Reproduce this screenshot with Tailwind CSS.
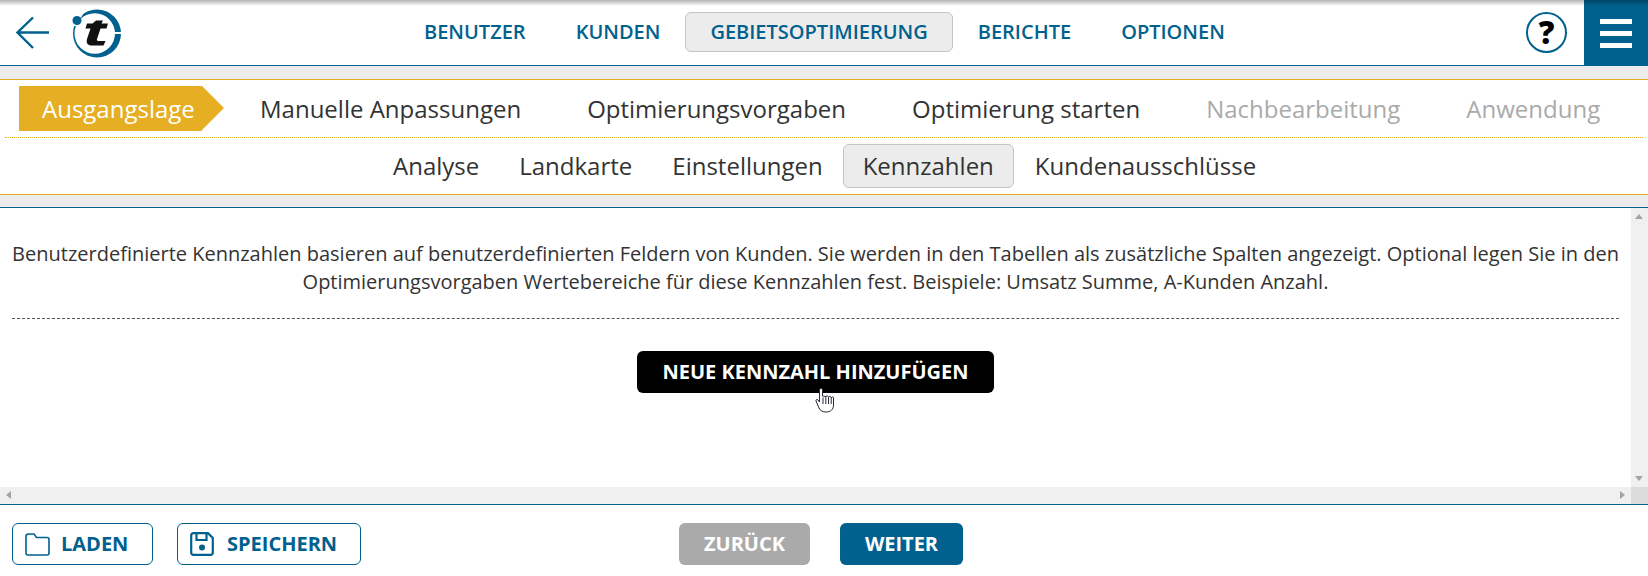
<!DOCTYPE html>
<html lang="de">
<head>
<meta charset="utf-8">
<script src="https://cdn.jsdelivr.net/npm/@tailwindcss/browser@4"></script>
</head>
<body class="w-[1648px] h-[576px] overflow-hidden bg-white font-['Open_Sans',sans-serif] text-[#333]">
<header class="relative h-[66px] flex items-center border-b border-[#00618f] bg-white">
  <div class="absolute z-10 top-0 left-0 right-0 h-[6px] bg-gradient-to-b from-black/30 to-transparent"></div>
  <div class="absolute left-0 top-0 flex items-center h-[65px]">
    <svg class="ml-[16px] w-[34px] h-[34px]" viewBox="0 0 34 34" fill="none" stroke="#00618f" stroke-width="2.4"><path d="M1.5 16.5H33M17 1.5 1.5 16.5 17 32"/></svg>
    <svg class="ml-[22px] w-[50px] h-[50px]" viewBox="0 0 50 50"><path fill-rule="evenodd" d="M25 1.5A24 24 0 1 1 25 49.5 24 24 0 1 1 25 1.5ZM22.75 5.25A20.25 20.25 0 1 0 22.75 45.75 20.25 20.25 0 1 0 22.75 5.25Z" fill="#00618f"/><path d="M0 0H14L10 8 4 18H0Z" fill="#fff"/><rect x="39" y="24" width="11" height="2" fill="#fff"/><circle cx="5" cy="12.5" r="4.5" fill="#00618f"/><path d="M24 12.5H31L29.5 15.5H36L34.5 20.5H28.5L25 31C24.5 32.5 25.5 33 27 33H33.5L31.5 37.5H20C15.5 37.5 14 35 15 31L18.5 20.5H13.5L15 15.5H20.5Z" fill="#111"/></svg>
  </div>
  <nav class="absolute left-[399px] top-[12px] flex items-center text-[20px] font-semibold text-[#00618f] leading-[26px]">
    <a class="px-[24px] py-[6px] border border-transparent rounded-[6px]">BENUTZER</a>
    <a class="px-[24px] py-[6px] border border-transparent rounded-[6px]">KUNDEN</a>
    <a class="px-[24px] py-[6px] border border-[#c4c4c4] rounded-[6px] bg-[#ececec]">GEBIETSOPTIMIERUNG</a>
    <a class="px-[24px] py-[6px] border border-transparent rounded-[6px]">BERICHTE</a>
    <a class="px-[24px] py-[6px] border border-transparent rounded-[6px]">OPTIONEN</a>
  </nav>
  <div class="absolute right-0 top-0 h-[65px] flex items-center">
    <div class="mr-[17px] w-[41px] h-[41px] rounded-full border-[2px] border-[#00618f] flex items-center justify-center text-[31px] font-extrabold leading-none text-black">?</div>
    <div class="w-[64px] h-[65px] pt-[2px] bg-[#00618f] flex flex-col items-center justify-center gap-[7px]">
      <span class="w-[32px] h-[5px] bg-white"></span><span class="w-[32px] h-[5px] bg-white"></span><span class="w-[32px] h-[5px] bg-white"></span>
    </div>
  </div>
</header>
<div class="h-[14px] bg-[#ececec] border-b border-[#e3ae23]"></div>
<section class="h-[115px] border-b border-[#e3ae23]">
  <div class="mx-[5px] h-[58px] pl-[14px] flex items-center gap-[66px] border-b border-dotted border-[#e3ae23] text-[24px] leading-[32px]">
    <div class="flex h-[45px] -mr-[30px]">
      <div class="h-full w-[183px] pl-[23px] bg-[#e5ae23] text-white flex items-center">Ausgangslage</div>
      <div class="w-0 h-0 border-y-[22.5px] border-y-transparent border-l-[22px] border-l-[#e5ae23]"></div>
    </div>
    <span>Manuelle Anpassungen</span>
    <span>Optimierungsvorgaben</span>
    <span>Optimierung starten</span>
    <span class="text-[#aaa]">Nachbearbeitung</span>
    <span class="text-[#aaa]">Anwendung</span>
  </div>
  <div class="pl-[373px] pt-[6px] flex items-center text-[24px] leading-[30px]">
    <a class="px-[19px] py-[6px] border border-transparent">Analyse</a>
    <a class="px-[19px] py-[6px] border border-transparent">Landkarte</a>
    <a class="px-[19px] py-[6px] border border-transparent">Einstellungen</a>
    <a class="px-[19px] py-[6px] border border-[#c4c4c4] rounded-[6px] bg-[#ececec]">Kennzahlen</a>
    <a class="px-[20px] py-[6px] border border-transparent">Kundenausschlüsse</a>
  </div>
</section>
<div class="h-[13px] bg-[#ececec] border-b border-[#00618f]"></div>
<main class="h-[297px] border-b border-[#00618f] grid grid-cols-[1fr_17px] grid-rows-[1fr_17px]">
  <div class="relative px-[12px] pt-[32px]">
    <p class="text-[20px] leading-[28px] text-center whitespace-nowrap">Benutzerdefinierte Kennzahlen basieren auf benutzerdefinierten Feldern von Kunden. Sie werden in den Tabellen als zusätzliche Spalten angezeigt. Optional legen Sie in den<br>Optimierungsvorgaben Wertebereiche für diese Kennzahlen fest. Beispiele: Umsatz Summe, A-Kunden Anzahl.</p>
    <div class="mt-[22px] border-t border-dashed border-[#555]"></div>
    <div class="mt-[32px] flex justify-center">
      <button class="w-[357px] h-[42px] rounded-[6px] bg-black text-white text-[20px] font-bold leading-none">NEUE KENNZAHL HINZUFÜGEN</button>
    </div>
    <svg class="absolute left-[815px] top-[179px] w-[20px] h-[26px]" viewBox="0 0 20 26" fill="#fff" stroke="#2a2a3a" stroke-width="1"><path d="M6 1.5C5 1.5 4.5 2.3 4.5 3V15L3 13C2 11.8 .5 12.6 1 14L4 21C5.5 24 8 25 11 25 15.5 25 18.5 22.5 18.5 18V11C18.5 9.5 16.5 9.5 16.2 11 16.2 9 13.8 8.8 13.5 10.5 13.5 8.5 11 8.3 10.8 10V9.5L7.5 9V3C7.5 2.2 7 1.5 6 1.5ZM8 10.5V17M10.8 10V17M13.5 10.5V17M16.2 11V17"/></svg>
  </div>
  <div class="bg-[#f0f0f0] relative"><span class="absolute left-[4px] top-[6px] w-0 h-0 border-x-[4px] border-x-transparent border-b-[5px] border-b-[#a3a3a3]"></span><span class="absolute left-[4px] bottom-[6px] w-0 h-0 border-x-[4px] border-x-transparent border-t-[5px] border-t-[#a3a3a3]"></span></div>
  <div class="bg-[#f0f0f0] relative"><span class="absolute left-[6px] top-[4px] w-0 h-0 border-y-[4px] border-y-transparent border-r-[5px] border-r-[#a3a3a3]"></span><span class="absolute right-[6px] top-[4px] w-0 h-0 border-y-[4px] border-y-transparent border-l-[5px] border-l-[#a3a3a3]"></span></div>
  <div class="bg-[#dcdcdc]"></div>
</main>
<footer class="relative h-[70px] text-[20px] font-bold leading-none">
  <div class="absolute left-[12px] top-[18px] flex gap-[24px] text-[#00618f]">
    <button class="w-[141px] h-[42px] border border-[#00618f] rounded-[6px] flex items-center pl-[12px] gap-[11px]">
      <svg class="w-[25px] h-[23px]" viewBox="0 0 25 23" fill="none" stroke="#00618f" stroke-width="1.6"><path d="M1 3.5C1 2 2 1 3.5 1H9L11.5 4.5H22C23.5 4.5 24 5.5 24 6.5V20C24 21 23.5 22 22 22H3C2 22 1 21 1 20Z"/></svg>
      LADEN</button>
    <button class="w-[184px] h-[42px] border border-[#00618f] rounded-[6px] flex items-center pl-[12px] gap-[13px]">
      <svg class="w-[24px] h-[24px]" viewBox="0 0 24 24" fill="none" stroke="#00618f" stroke-width="2.2"><path d="M3.5 1.2H18L22.8 6V20.5C22.8 22 22 22.8 20.5 22.8H3.5C2 22.8 1.2 22 1.2 20.5V3.5C1.2 2 2 1.2 3.5 1.2ZM6.5 1.5V8H16.5V1.5"/><circle cx="12" cy="15.5" r="3" fill="#00618f" stroke="none"/></svg>
      SPEICHERN</button>
  </div>
  <div class="absolute left-[679px] top-[18px] flex gap-[30px] text-white">
    <button class="w-[131px] h-[42px] rounded-[6px] bg-[#aaaaaa]">ZURÜCK</button>
    <button class="w-[123px] h-[42px] rounded-[6px] bg-[#00618f]">WEITER</button>
  </div>
</footer>
</body>
</html>
